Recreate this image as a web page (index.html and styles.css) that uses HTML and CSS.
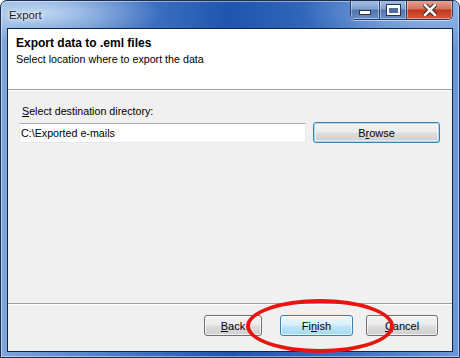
FILE: index.html
```html
<!DOCTYPE html>
<html lang="en">
    <head>
        <meta charset="UTF-8">
        <title>Export</title>
        <link rel="stylesheet" href="styles.css">
    </head>
    <body>
        <div class="window">
            <div class="titlebar">
                <span class="title">Export</span>
                <div class="caption-btns">
                    <div class="cap cap-min"><span class="glyph-min"></span></div>
                    <div class="cap cap-max"><span class="glyph-max"></span></div>
                    <div class="cap cap-close">
                        <svg width="14" height="12" viewBox="0 0 14 12">
                            <path d="M2 1 L12 11 M12 1 L2 11" stroke="#3b2222" stroke-width="4.6" stroke-linecap="square"/>
                            <path d="M2 1 L12 11 M12 1 L2 11" stroke="#fff" stroke-width="2.6" stroke-linecap="square"/>
                        </svg>
                    </div>
                </div>
            </div>

            <div class="client">
                <div class="header">
                    <div class="header-title">Export data to .eml files</div>
                    <div class="header-sub">Select location where to export the data</div>
                </div>

                <div class="content">
                    <label class="field-label" for="dest"><u>S</u>elect destination directory:</label>
                    <div class="row">
                        <input type="text" id="dest" class="textbox" value="C:\Exported e-mails">
                        <button class="btn btn-browse">B<u>r</u>owse</button>
                    </div>
                </div>

                <div class="footer">
                    <button class="btn btn-back"><u>B</u>ack</button>
                    <button class="btn btn-default">Fi<u>n</u>ish</button>
                    <button class="btn btn-cancel"><u>C</u>ancel</button>
                </div>

                <div class="highlight"></div>
            </div>
        </div>
    </body>
</html>
```

FILE: styles.css
```css
body {
    margin: 0;
    font-family: 'Liberation Sans', Arial, sans-serif;
    font-size: 10.7px;
    color: #000;
}

.window {
    width: 460px;
    height: 358px;
    box-sizing: border-box;
    display: flex;
    flex-direction: column;
    border: 1px solid #1b2f52;
    border-radius: 7px 7px 0 0;
    background:
        radial-gradient(ellipse 120px 30px at 40px 12px, rgba(220, 235, 250, 0.75), transparent),
        radial-gradient(ellipse 120px 40px at 420px 10px, rgba(170, 200, 240, 0.7), transparent),
        linear-gradient(to right, #7ea6dc 0%, #4a7cc8 25%, #1f55ae 50%, #3b6fc0 75%, #6a97d6 100%);
    padding: 0 6px 5px 6px;
    box-shadow: inset 0 0 0 1px rgba(255, 255, 255, 0.45);
    overflow: hidden;
}

.titlebar {
    height: 27px;
    display: flex;
    align-items: flex-start;
    justify-content: space-between;
    flex-shrink: 0;
}

.title {
    margin: 8px 0 0 2px;
    font-size: 11.3px;
    color: #1a1a1a;
    text-shadow: 0 0 6px #fff, 0 0 3px #fff;
}

.caption-btns {
    display: flex;
    margin-top: -1px;
    border: 1px solid #2a3f66;
    border-top: none;
    border-radius: 0 0 5px 5px;
    overflow: hidden;
    box-shadow: 0 1px 0 rgba(255, 255, 255, 0.5);
}

.cap {
    height: 19px;
    display: flex;
    align-items: center;
    justify-content: center;
    box-shadow: inset 0 0 0 1px rgba(255, 255, 255, 0.4);
}

.cap-min, .cap-max {
    background: linear-gradient(to bottom, #a8c2e4 0%, #7f9fce 48%, #4f73ad 52%, #6a8ec6 100%);
    border-right: 1px solid #2a3f66;
}

.cap-min { width: 28px; }
.cap-max { width: 26px; }

.cap-close {
    width: 45px;
    background: linear-gradient(to bottom, #e6a796 0%, #d4715a 48%, #c0361c 52%, #d75a3e 100%);
}

.glyph-min {
    width: 10px;
    height: 3px;
    background: #fff;
    border: 1px solid #2b3550;
    margin-top: 6px;
}

.glyph-max {
    width: 9px;
    height: 5px;
    border: 2px solid #fff;
    border-top-width: 3px;
    outline: 1px solid #2b3550;
    background: #4e6d9f;
}

.client {
    flex: 1;
    position: relative;
    display: flex;
    flex-direction: column;
    background: #f0f0f0;
    border: 1px solid #0f2547;
}

.header {
    height: 61px;
    box-sizing: border-box;
    background: #fff;
    padding: 7px 8px 0 8px;
    border-bottom: 1px solid #a0a0a0;
    box-shadow: 0 1px 0 #fff;
}

.header-title {
    font-weight: bold;
    font-size: 12px;
    line-height: 15px;
}

.header-sub {
    margin-top: 1px;
    line-height: 15px;
}

.content {
    flex: 1;
    padding: 14px 12px 0 11px;
}

.field-label {
    display: block;
    margin-left: 3px;
    line-height: 15px;
}

.row {
    display: flex;
    align-items: center;
    gap: 7px;
    margin-top: 3px;
}

.textbox {
    width: 287px;
    height: 20px;
    box-sizing: border-box;
    border: 1px solid #e3e9ef;
    border-top-color: #abadb3;
    background: #fff;
    padding: 0 1px;
    font-family: inherit;
    font-size: 10.7px;
    outline: none;
}

.btn {
    height: 21px;
    box-sizing: border-box;
    font-family: inherit;
    font-size: 11px;
    color: #000;
    border: 1px solid #707070;
    border-radius: 3px;
    background: linear-gradient(to bottom, #f2f2f2 0%, #ebebeb 48%, #dddddd 52%, #cfcfcf 100%);
    box-shadow: inset 0 0 0 1px rgba(255, 255, 255, 0.7);
    padding: 0;
}

.btn-browse {
    width: 127px;
    border-color: #3c7fb1;
    box-shadow: inset 0 0 0 1px #a5dbf8, inset 0 0 0 2px rgba(255, 255, 255, 0.5);
}

.footer {
    height: 48px;
    display: flex;
    align-items: flex-start;
    justify-content: flex-end;
    gap: 13px;
    padding: 11px 14px 0 0;
    box-sizing: border-box;
    border-top: 1px solid #a0a0a0;
    box-shadow: inset 0 1px 0 #fff;
}

.btn-back { width: 58px; margin-right: 5px; }
.btn-cancel { width: 72px; }

.btn-default {
    width: 73px;
    border-color: #3c7fb1;
    background: linear-gradient(to bottom, #eaf6fd 0%, #d9f0fc 48%, #bee6fd 52%, #a7d9f5 100%);
}

.highlight {
    position: absolute;
    left: 238px;
    top: 270px;
    width: 140px;
    height: 46px;
    border: 4px solid #e8140e;
    border-radius: 50%;
    pointer-events: none;
}
```
